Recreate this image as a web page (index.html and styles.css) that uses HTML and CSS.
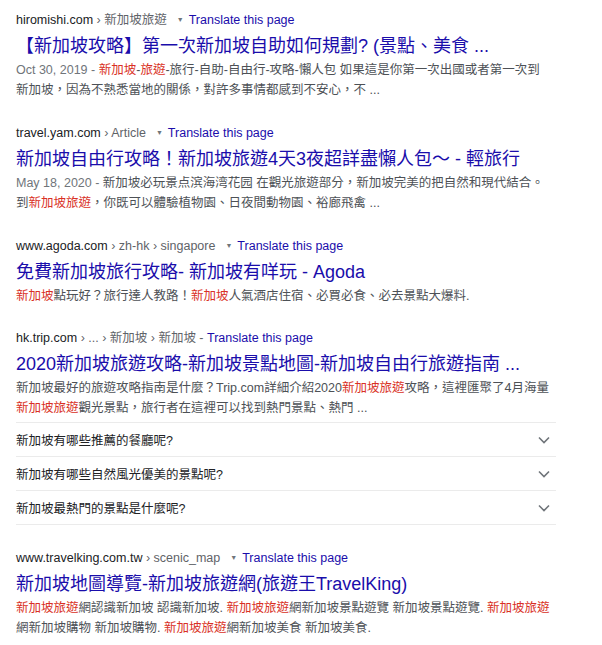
FILE: index.html
```html
<!DOCTYPE html>
<html lang="zh-Hant">
<head>
    <meta charset="UTF-8">
    <meta name="viewport" content="width=device-width, initial-scale=1.0">
    <title>新加坡旅遊 - 搜尋結果</title>
    <link rel="stylesheet" href="styles.css">
</head>
<body>
    <div class="results">

        <!-- Result 1 -->
        <div class="result">
            <div class="url-line">
                <span class="domain">hiromishi.com</span>
                <span class="crumbs">› 新加坡旅遊</span><span class="caret">▼</span><a class="translate" href="#">Translate this page</a>
            </div>
            <a class="title" href="#">【新加坡攻略】第一次新加坡自助如何規劃? (景點、美食 ...</a>
            <div class="snippet">
                <span class="date">Oct 30, 2019 - </span><em>新加坡</em>-<em>旅遊</em>-旅行-自助-自由行-攻略-懶人包 如果這是你第一次出國或者第一次到<br>新加坡，因為不熟悉當地的關係，對許多事情都感到不安心，不 ...
            </div>
        </div>

        <!-- Result 2 -->
        <div class="result">
            <div class="url-line">
                <span class="domain">travel.yam.com</span>
                <span class="crumbs">› Article</span><span class="caret">▼</span><a class="translate" href="#">Translate this page</a>
            </div>
            <a class="title" href="#">新加坡自由行攻略！新加坡旅遊4天3夜超詳盡懶人包～ - 輕旅行</a>
            <div class="snippet">
                <span class="date">May 18, 2020 - </span>新加坡必玩景点滨海湾花园 在觀光旅遊部分，新加坡完美的把自然和現代結合。<br>到<em>新加坡旅遊</em>，你既可以體驗植物園、日夜間動物園、裕廊飛禽 ...
            </div>
        </div>

        <!-- Result 3 -->
        <div class="result">
            <div class="url-line">
                <span class="domain">www.agoda.com</span>
                <span class="crumbs">› zh-hk › singapore</span><span class="caret">▼</span><a class="translate" href="#">Translate this page</a>
            </div>
            <a class="title" href="#">免費新加坡旅行攻略- 新加坡有咩玩 - Agoda</a>
            <div class="snippet">
                <em>新加坡</em>點玩好？旅行達人教路！<em>新加坡</em>人氣酒店住宿、必買必食、必去景點大爆料.
            </div>
        </div>

        <!-- Result 4 with questions -->
        <div class="result">
            <div class="url-line">
                <span class="domain">hk.trip.com</span>
                <span class="crumbs">› ... › 新加坡 › 新加坡 -</span>
                <a class="translate" href="#">Translate this page</a>
            </div>
            <a class="title" href="#">2020新加坡旅遊攻略-新加坡景點地圖-新加坡自由行旅遊指南 ...</a>
            <div class="snippet">
                新加坡最好的旅遊攻略指南是什麼？Trip.com詳細介紹2020<em>新加坡旅遊</em>攻略，這裡匯聚了4月海量<br><em>新加坡旅遊</em>觀光景點，旅行者在這裡可以找到熱門景點、熱門 ...
            </div>
            <div class="faq">
                <div class="faq-row">
                    <span>新加坡有哪些推薦的餐廳呢?</span>
                    <svg class="chevron" width="12" height="8" viewBox="0 0 12 8"><path d="M1 1.5l5 5 5-5" fill="none" stroke="#70757a" stroke-width="1.6"/></svg>
                </div>
                <div class="faq-row">
                    <span>新加坡有哪些自然風光優美的景點呢?</span>
                    <svg class="chevron" width="12" height="8" viewBox="0 0 12 8"><path d="M1 1.5l5 5 5-5" fill="none" stroke="#70757a" stroke-width="1.6"/></svg>
                </div>
                <div class="faq-row">
                    <span>新加坡最熱門的景點是什麼呢?</span>
                    <svg class="chevron" width="12" height="8" viewBox="0 0 12 8"><path d="M1 1.5l5 5 5-5" fill="none" stroke="#70757a" stroke-width="1.6"/></svg>
                </div>
            </div>
        </div>

        <!-- Result 5 -->
        <div class="result">
            <div class="url-line">
                <span class="domain">www.travelking.com.tw</span>
                <span class="crumbs">› scenic_map</span><span class="caret">▼</span><a class="translate" href="#">Translate this page</a>
            </div>
            <a class="title" href="#">新加坡地圖導覽-新加坡旅遊網(旅遊王TravelKing)</a>
            <div class="snippet">
                <em>新加坡旅遊</em>網認識新加坡 認識新加坡. <em>新加坡旅遊</em>網新加坡景點遊覽 新加坡景點遊覽. <em>新加坡旅遊</em><br>網新加坡購物 新加坡購物. <em>新加坡旅遊</em>網新加坡美食 新加坡美食.
            </div>
        </div>

    </div>
</body>
</html>
```

FILE: styles.css
```css
body {
    margin: 0;
    background-color: #fff;
    font-family: 'Liberation Sans', 'Noto Sans CJK TC', sans-serif;
    color: #4d5156;
}

.results {
    width: 540px;
    padding: 11px 0 0 16px;
}

.result {
    margin-bottom: 24px;
}

/* URL line above each title */
.url-line {
    font-size: 12.5px;
    line-height: 17px;
    white-space: nowrap;
}

.domain {
    color: #202124;
}

.crumbs {
    color: #5f6368;
}

.caret {
    display: inline-block;
    font-size: 7px;
    color: #70757a;
    margin: 0 5px 0 10px;
    vertical-align: 2px;
}

.translate {
    color: #1a0dab;
    text-decoration: none;
}

.title {
    display: block;
    margin-top: 5px;
    font-size: 18px;
    line-height: 24px;
    color: #1a0dab;
    text-decoration: none;
    white-space: nowrap;
}

.snippet {
    margin-top: 2px;
    font-size: 12.5px;
    line-height: 20px;
    white-space: nowrap;
}

.snippet em {
    font-style: normal;
    color: #d93025;
}

.date {
    color: #70757a;
}

/* People also ask rows */
.faq {
    margin-top: 4px;
    border-bottom: 1px solid #ebebeb;
}

.faq-row {
    display: flex;
    justify-content: space-between;
    align-items: center;
    height: 33px;
    border-top: 1px solid #ebebeb;
    padding-right: 6px;
    font-size: 12.5px;
    color: #202124;
}

.chevron {
    display: block;
}
```
